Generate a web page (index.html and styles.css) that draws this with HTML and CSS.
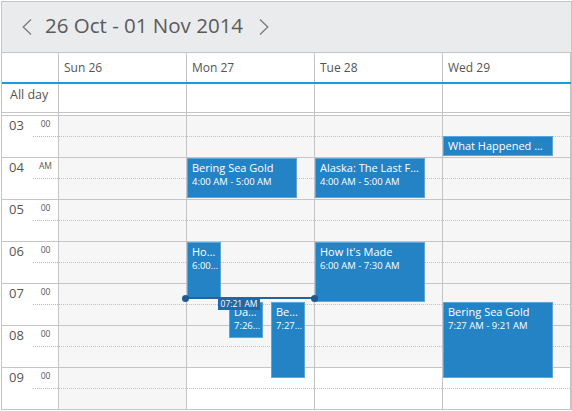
FILE: index.html
```html
<!DOCTYPE html>
<html lang="en">
<head>
<meta charset="utf-8">
<title>Scheduler - Week</title>
<link rel="stylesheet" href="styles.css">
</head>
<body>
<div class="scheduler">
  <div class="toolbar">
    <span class="nav"><svg width="10" height="16" viewBox="0 0 10 16"><polyline points="9,0.5 1.2,8 9,15.5"/></svg></span>
    <span class="range">26 Oct - 01 Nov 2014</span>
    <span class="nav"><svg width="10" height="16" viewBox="0 0 10 16"><polyline points="1,0.5 8.8,8 1,15.5"/></svg></span>
  </div>

  <div class="head-row">
    <div class="time-cell"></div>
    <div class="day-cell head">Sun 26</div>
    <div class="day-cell head">Mon 27</div>
    <div class="day-cell head">Tue 28</div>
    <div class="day-cell head">Wed 29</div>
  </div>

  <div class="allday-row">
    <div class="time-cell allday-label">All day</div>
    <div class="day-cell"></div>
    <div class="day-cell"></div>
    <div class="day-cell"></div>
    <div class="day-cell"></div>
  </div>

  <div class="spacer-row">
    <div class="time-cell"></div>
    <div class="day-cell"></div>
    <div class="day-cell"></div>
    <div class="day-cell"></div>
    <div class="day-cell"></div>
  </div>

  <div class="body">
    <div class="times">
      <div class="hour"><span class="hour-label">03</span><div class="minutes"><div class="min-label">00</div></div></div>
      <div class="hour"><span class="hour-label">04</span><div class="minutes"><div class="min-label">AM</div></div></div>
      <div class="hour"><span class="hour-label">05</span><div class="minutes"><div class="min-label">00</div></div></div>
      <div class="hour"><span class="hour-label">06</span><div class="minutes"><div class="min-label">00</div></div></div>
      <div class="hour"><span class="hour-label">07</span><div class="minutes"><div class="min-label">00</div></div></div>
      <div class="hour"><span class="hour-label">08</span><div class="minutes"><div class="min-label">00</div></div></div>
      <div class="hour"><span class="hour-label">09</span><div class="minutes"><div class="min-label">00</div></div></div>
    </div>

    <div class="day off">
      <div class="slot"></div><div class="slot"></div><div class="slot"></div><div class="slot"></div>
      <div class="slot"></div><div class="slot"></div><div class="slot"></div><div class="slot"></div>
      <div class="slot"></div><div class="slot"></div><div class="slot"></div><div class="slot"></div>
      <div class="slot"></div><div class="slot"></div>
    </div>

    <div class="day work">
      <div class="slot"></div><div class="slot"></div><div class="slot"></div><div class="slot"></div>
      <div class="slot"></div><div class="slot"></div><div class="slot"></div><div class="slot"></div>
      <div class="slot"></div><div class="slot"></div><div class="slot"></div><div class="slot"></div>
      <div class="slot"></div><div class="slot"></div>
      <div class="event" style="top:42px;height:40px;left:0;width:110px">
        <div class="event-title">Bering Sea Gold</div>
        <div class="event-time">4:00 AM - 5:00 AM</div>
      </div>
      <div class="event" style="top:126px;height:57px;left:0;width:34px">
        <div class="event-title">How It's Made</div>
        <div class="event-time">6:00 AM - 7:30 AM</div>
      </div>
      <div class="event" style="top:186px;height:36px;left:42px;width:34px">
        <div class="event-title">Dangerous Flights</div>
        <div class="event-time">7:26 AM - 8:17 AM</div>
      </div>
      <div class="event" style="top:186px;height:76px;left:84px;width:34px">
        <div class="event-title">Bering Sea Gold</div>
        <div class="event-time">7:27 AM - 9:21 AM</div>
      </div>
      <div class="now-line"></div>
      <div class="now-label">07:21 AM</div>
    </div>

    <div class="day work">
      <div class="slot"></div><div class="slot"></div><div class="slot"></div><div class="slot"></div>
      <div class="slot"></div><div class="slot"></div><div class="slot"></div><div class="slot"></div>
      <div class="slot"></div><div class="slot"></div><div class="slot"></div><div class="slot"></div>
      <div class="slot"></div><div class="slot"></div>
      <div class="event" style="top:42px;height:40px;left:0;width:110px">
        <div class="event-title">Alaska: The Last Frontier</div>
        <div class="event-time">4:00 AM - 5:00 AM</div>
      </div>
      <div class="event" style="top:126px;height:60px;left:0;width:110px">
        <div class="event-title">How It's Made</div>
        <div class="event-time">6:00 AM - 7:30 AM</div>
      </div>
    </div>

    <div class="day work">
      <div class="slot"></div><div class="slot"></div><div class="slot"></div><div class="slot"></div>
      <div class="slot"></div><div class="slot"></div><div class="slot"></div><div class="slot"></div>
      <div class="slot"></div><div class="slot"></div><div class="slot"></div><div class="slot"></div>
      <div class="slot"></div><div class="slot"></div>
      <div class="event" style="top:20px;height:20px;left:0;width:110px">
        <div class="event-title">What Happened Next</div>
      </div>
      <div class="event" style="top:186px;height:76px;left:0;width:110px">
        <div class="event-title">Bering Sea Gold</div>
        <div class="event-time">7:27 AM - 9:21 AM</div>
      </div>
    </div>
  </div>
</div>
</body>
</html>
```

FILE: styles.css
```css
* {
  box-sizing: border-box;
}

html, body {
  margin: 0;
  padding: 0;
  background: #ffffff;
}

body {
  font-family: "Open Sans", "Liberation Sans", sans-serif;
  color: #555555;
}

.scheduler {
  margin: 1px 0 0 1px;
  width: 571px;
  height: 409px;
  border: 1px solid #c5c5c5;
  display: flex;
  flex-direction: column;
  overflow: hidden;
}

/* toolbar */
.toolbar {
  flex: none;
  height: 51px;
  background: #eaebed;
  border-bottom: 1px solid #c5c5c5;
  display: flex;
  align-items: center;
  padding-left: 20px;
  gap: 12px;
}

.nav {
  display: flex;
  width: 10px;
  height: 16px;
  margin-top: -1px;
}

.nav polyline {
  fill: none;
  stroke: #7b7b7b;
  stroke-width: 1.3;
}

.range {
  font-size: 20.5px;
  line-height: 27px;
  color: #5a5a5a;
  margin-top: -3px;
  margin-left: 1px;
  padding-right: 4px;
}

/* header rows */
.head-row,
.allday-row,
.spacer-row {
  flex: none;
  display: flex;
}

.head-row {
  height: 31px;
  border-bottom: 2px solid #1b9bd7;
}

.allday-row {
  height: 29px;
  border-bottom: 1px solid #c5c5c5;
}

.spacer-row {
  height: 3px;
  border-bottom: 1px solid #c5c5c5;
}

.time-cell {
  flex: none;
  width: 57px;
  border-right: 1px solid #c5c5c5;
}

.day-cell {
  flex: none;
  width: 128px;
  border-right: 1px solid #c5c5c5;
}

.head {
  font-size: 12px;
  line-height: 16px;
  padding: 7px 0 0 5px;
  color: #555555;
}

.allday-label {
  font-size: 12.5px;
  line-height: 17px;
  padding: 2px 0 0 8px;
}

/* body grid */
.body {
  flex: 1;
  display: flex;
  overflow: hidden;
}

.times {
  flex: none;
  width: 57px;
  border-right: 1px solid #c5c5c5;
}

.hour {
  height: 42px;
  border-bottom: 1px solid #c5c5c5;
  display: flex;
}

.hour-label {
  flex: none;
  width: 31px;
  font-size: 13px;
  line-height: 17px;
  padding: 1px 0 0 7px;
}

.minutes {
  flex: 1;
}

.min-label {
  height: 21px;
  border-bottom: 1px dotted #b9b9b9;
  text-align: center;
  font-size: 8.5px;
  line-height: 11px;
  padding-top: 2px;
}

.day {
  flex: none;
  width: 128px;
  border-right: 1px solid #c5c5c5;
  position: relative;
}

.slot {
  height: 21px;
  border-bottom: 1px dotted #c2c2c2;
}

.slot:nth-child(even) {
  border-bottom: 1px solid #c5c5c5;
}

.day.off .slot,
.day.work .slot:nth-child(-n+12) {
  background: #f5f6f5;
}

/* events */
.event {
  position: absolute;
  background: #2483c5;
  border: 1px solid #5aa6dd;
  color: #ffffff;
  padding: 1px 2px 0 4px;
  overflow: hidden;
}

.event-title,
.event-time {
  white-space: nowrap;
  overflow: hidden;
  text-overflow: ellipsis;
}

.event-title {
  font-size: 11px;
  line-height: 15px;
}

.event-time {
  font-size: 9.5px;
  line-height: 14px;
  margin-right: -2px;
}

/* current time marker */
.now-line {
  position: absolute;
  z-index: 2;
  left: -2px;
  top: 181px;
  width: 129px;
  height: 2px;
  background: #24649d;
}

.now-line::before,
.now-line::after {
  content: "";
  position: absolute;
  top: -2.5px;
  width: 7px;
  height: 7px;
  border-radius: 50%;
  background: #1f5a8f;
}

.now-line::before {
  left: -3.5px;
}

.now-line::after {
  right: -3.5px;
}

.now-label {
  position: absolute;
  z-index: 2;
  left: 31px;
  top: 182px;
  width: 42px;
  height: 12px;
  background: #2168a7;
  color: #ffffff;
  font-size: 8.5px;
  line-height: 12px;
  text-align: center;
}
```
